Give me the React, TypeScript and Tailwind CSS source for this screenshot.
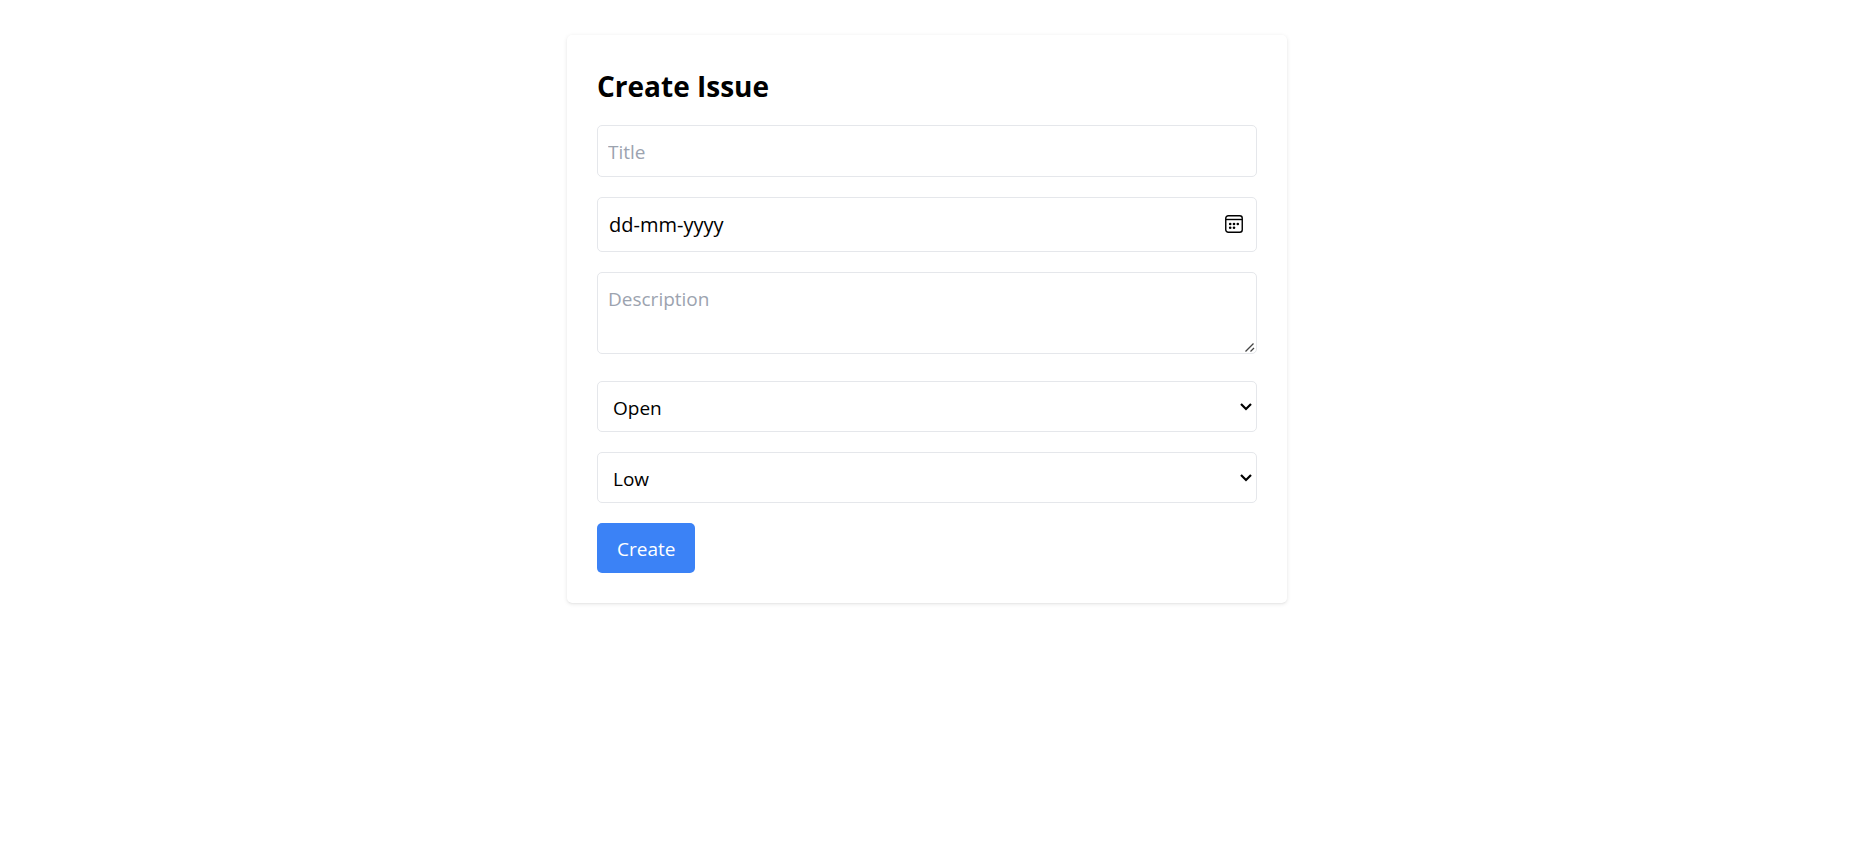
import { useState } from 'react';

const field =
  'block w-full rounded-[5px] border border-[#e5e7eb] bg-white leading-[30px] text-black outline-none';

function Chevron() {
  return (
    <svg
      className="pointer-events-none absolute top-0 right-[5px] h-full w-3"
      viewBox="0 0 12 12"
      fill="none"
      stroke="currentColor"
      strokeWidth="2.2"
      aria-hidden="true"
    >
      <path d="M1 3.5 6 8.5 11 3.5" />
    </svg>
  );
}

function CalendarIcon() {
  return (
    <svg className="size-[18px]" viewBox="0 0 18 18" fill="none" aria-hidden="true">
      <rect x="0.75" y="0.75" width="16.5" height="16.5" rx="2.5" stroke="currentColor" strokeWidth="1.4" />
      <path d="M1 4.5h16" stroke="currentColor" strokeWidth="1.4" />
      <g fill="currentColor">
        <circle cx="5.2" cy="9" r="1.3" />
        <circle cx="9" cy="9" r="1.3" />
        <circle cx="12.8" cy="9" r="1.3" />
        <circle cx="5.2" cy="12.7" r="1.3" />
        <circle cx="9" cy="12.7" r="1.3" />
      </g>
    </svg>
  );
}

function ResizeGrip() {
  return (
    <svg
      className="pointer-events-none absolute right-[2px] bottom-[2px] size-[10px]"
      viewBox="0 0 10 10"
      fill="none"
      stroke="#444444"
      strokeWidth="1.3"
      aria-hidden="true"
    >
      <path d="M0.5 9.5 8.5 1.5M5.5 9.5 9 6" />
    </svg>
  );
}

function Select({ label, options }: { label: string; options: string[] }) {
  const [value, setValue] = useState(options[0]);
  return (
    <div className="relative">
      <select
        aria-label={label}
        value={value}
        onChange={(e) => setValue(e.target.value)}
        className={`${field} h-[51px] appearance-none pt-0.5 pr-6 pl-[15px] text-[19px]`}
      >
        {options.map((o) => (
          <option key={o}>{o}</option>
        ))}
      </select>
      <Chevron />
    </div>
  );
}

export default function App() {
  return (
    <main className="min-h-screen bg-white py-[35px] pr-[17px] font-['Open_Sans','Noto_Sans',sans-serif] text-black">
      <form
        onSubmit={(e) => e.preventDefault()}
        className="mx-auto flex max-w-[720px] flex-col gap-5 rounded-[5px] bg-white p-[30px] shadow-[0_1px_4px_0_rgba(0,0,0,0.1),0_1px_2px_-1px_rgba(0,0,0,0.1)]"
      >
        <h1 className="pt-0.5 text-[28px] leading-[38px] font-bold">Create Issue</h1>
        <input
          type="text"
          aria-label="Title"
          placeholder="Title"
          className={`${field} h-[52px] px-[10px] pt-0.5 text-[19px] placeholder:text-[#9ca3af]`}
        />
        <div className="relative">
          <input
            type="text"
            aria-label="Date"
            placeholder="dd-mm-yyyy"
            className={`${field} h-[55px] pr-10 pl-[11px] text-[20px] placeholder:text-black`}
          />
          <button
            type="button"
            aria-label="Open calendar"
            className="absolute top-0 right-[14px] flex h-[53px] items-center"
          >
            <CalendarIcon />
          </button>
        </div>
        <div className="relative mb-[7px]">
          <textarea
            rows={2}
            aria-label="Description"
            placeholder="Description"
            className={`${field} h-[82px] resize-y px-[10px] pt-[11px] pb-[9px] text-[19px] placeholder:text-[#9ca3af] [&::-webkit-resizer]:hidden`}
          />
          <ResizeGrip />
        </div>
        <Select label="Status" options={['Open', 'In Progress', 'Closed']} />
        <Select label="Priority" options={['Low', 'Medium', 'High']} />
        <button
          type="submit"
          className="self-start rounded-[5px] bg-[#3b82f6] px-5 pt-[11px] pb-[9px] text-[19px] leading-[30px] text-white"
        >
          Create
        </button>
      </form>
    </main>
  );
}
